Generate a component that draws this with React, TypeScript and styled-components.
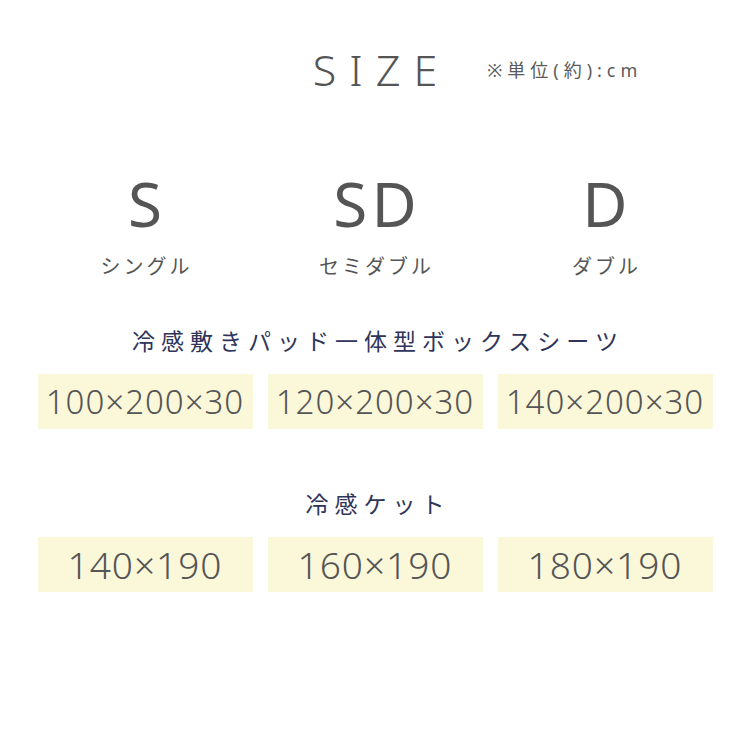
import React from 'react';
import styled, { createGlobalStyle } from 'styled-components';

const GlobalStyle = createGlobalStyle`
  html, body {
    margin: 0;
    padding: 0;
    background: #ffffff;
  }
  body {
    font-family: "Noto Sans", "Noto Sans CJK JP", sans-serif;
    color: #555555;
  }
`;

const Page = styled.div`
  width: 750px;
  height: 750px;
  box-sizing: border-box;
  padding-top: 42px;
  background: #fff;
`;

const Header = styled.div`
  display: grid;
  grid-template-columns: 1fr auto 1fr;
  align-items: center;
`;

const Title = styled.h1`
  grid-column: 2;
  margin: 0;
  font-size: 43px;
  font-weight: 300;
  line-height: 56px;
  letter-spacing: 13px;
  margin-right: -13px;
  color: #555555;
`;

const Note = styled.span`
  grid-column: 3;
  justify-self: start;
  margin-left: 50px;
  margin-top: -2px;
  font-size: 18px;
  letter-spacing: 5px;
  color: #5a5a5a;
`;

const Columns = styled.div`
  width: 675px;
  margin: 0 auto;
  display: grid;
  grid-template-columns: repeat(3, 215px);
  column-gap: 15px;
`;

const SizeRow = styled(Columns)`
  margin-top: 70px;
`;

const SizeCell = styled.div`
  display: flex;
  flex-direction: column;
  align-items: center;
`;

const SizeCode = styled.div`
  font-size: 62px;
  line-height: 70px;
  font-weight: 400;
  letter-spacing: 4px;
  margin-right: -4px;
  color: #555555;
`;

const SizeName = styled.div`
  margin-top: 16px;
  font-size: 20px;
  line-height: 26px;
  letter-spacing: 3px;
  margin-right: -3px;
  color: #555555;
`;

const Section = styled.section<{ $gap: number }>`
  margin-top: ${(p) => p.$gap}px;
`;

const SectionTitle = styled.h2`
  margin: 0 0 18px;
  text-align: center;
  font-size: 23px;
  font-weight: 400;
  line-height: 30px;
  letter-spacing: 6px;
  margin-right: -6px;
  color: #2f3459;
`;

const Box = styled.div<{ $size: number }>`
  height: 55px;
  background: #fbf8da;
  display: flex;
  align-items: center;
  justify-content: center;
  font-size: ${(p) => p.$size}px;
  letter-spacing: 1px;
  color: #555555;
  font-weight: 300;
`;

const sizes = [
  { code: 'S', name: 'シングル' },
  { code: 'SD', name: 'セミダブル' },
  { code: 'D', name: 'ダブル' },
];

const pad = ['100×200×30', '120×200×30', '140×200×30'];
const ket = ['140×190', '160×190', '180×190'];

const App = () => (
  <Page>
    <GlobalStyle />
    <Header>
      <Title>SIZE</Title>
      <Note>※単位(約):cm</Note>
    </Header>

    <SizeRow>
      {sizes.map((s) => (
        <SizeCell key={s.code}>
          <SizeCode>{s.code}</SizeCode>
          <SizeName>{s.name}</SizeName>
        </SizeCell>
      ))}
    </SizeRow>

    <Section $gap={46}>
      <SectionTitle>冷感敷きパッド一体型ボックスシーツ</SectionTitle>
      <Columns>
        {pad.map((t) => (
          <Box key={t} $size={33}>{t}</Box>
        ))}
      </Columns>
    </Section>

    <Section $gap={60}>
      <SectionTitle>冷感ケット</SectionTitle>
      <Columns>
        {ket.map((t) => (
          <Box key={t} $size={37}>{t}</Box>
        ))}
      </Columns>
    </Section>
  </Page>
);

export default App;
